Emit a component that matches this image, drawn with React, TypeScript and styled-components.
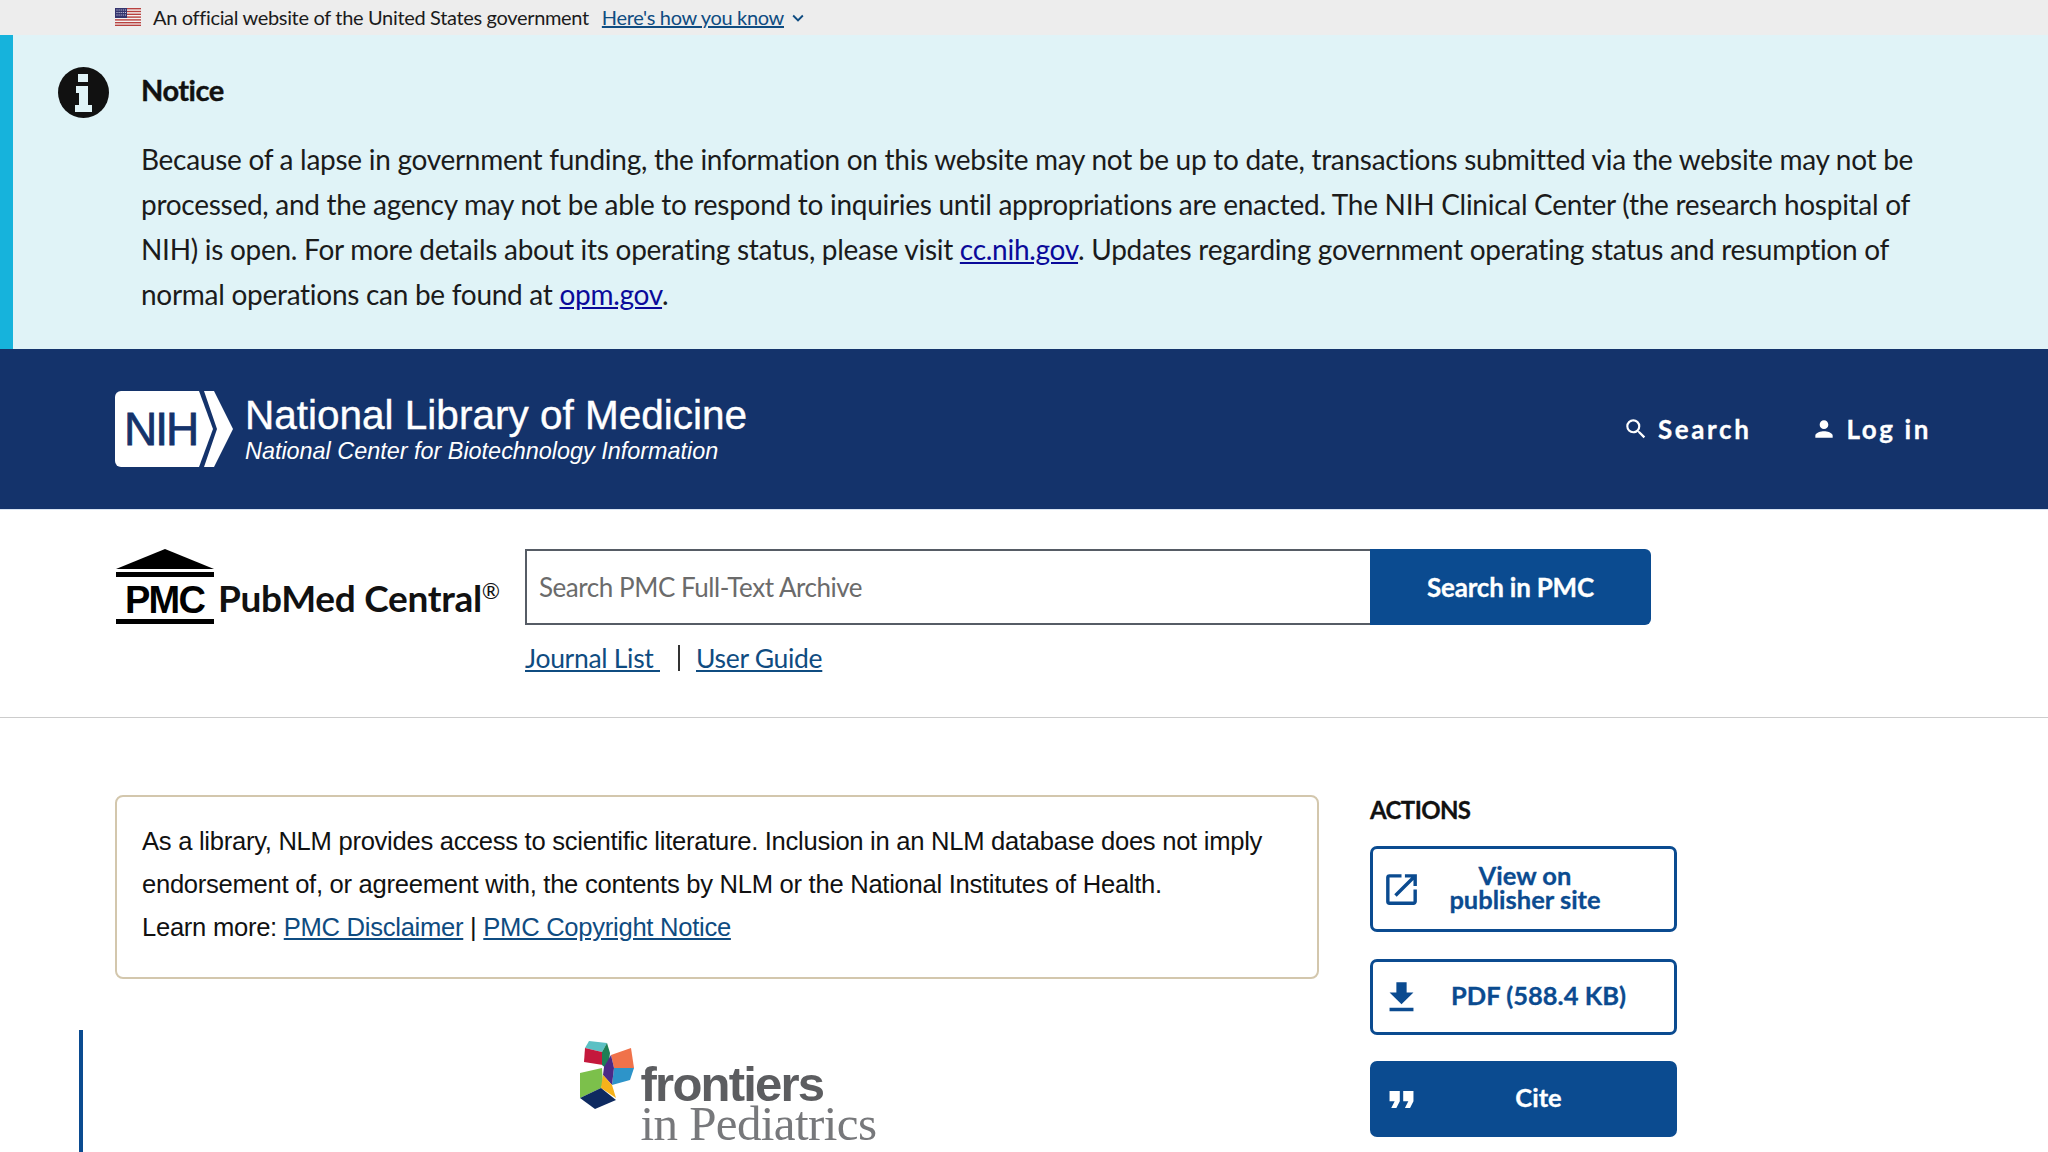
import React from 'react';
import styled, { createGlobalStyle } from 'styled-components';

const SANS = '"Lato", "Noto Sans", sans-serif';
const ARIAL = '"Liberation Sans", Arial, sans-serif';
const BLUE = '#0b4b90';
const LINK = '#0f4c81';

const GlobalStyle = createGlobalStyle`
  html, body {
    margin: 0;
    padding: 0;
    height: 1152px;
    overflow: hidden;
    background: #fff;
    font-family: ${SANS};
    color: #1b1b1b;
  }
  * { box-sizing: border-box; }
`;

const GovBanner = styled.div`
  height: 35px;
  background: #ededed;
  display: flex;
  align-items: center;
  padding: 0 0 2px 115px;
  font-size: 20px;
  letter-spacing: -0.33px;
`;

const GovText = styled.span`
  margin: 0 13px 0 12px;
`;

const GovLink = styled.a`
  color: ${LINK};
  text-decoration: underline;
`;

const Chevron = styled.svg`
  width: 22px;
  height: 22px;
  margin: 3px 0 0 3px;
  fill: ${LINK};
`;

const Notice = styled.section`
  height: 314px;
  background: #e0f3f7;
  border-left: 13px solid #16b3dc;
  display: flex;
  padding: 32px 0 0 45px;
`;

const NoticeIcon = styled.svg`
  width: 51px;
  height: 51px;
  flex: none;
`;

const NoticeBody = styled.div`
  margin: 3px 0 0 32px;
`;

const NoticeTitle = styled.h3`
  margin: 0 0 27px;
  font-size: 29px;
  line-height: 40px;
  font-weight: 700;
  letter-spacing: -0.5px;
  -webkit-text-stroke: 0.4px #111;
  color: #111;
`;

const NoticeText = styled.p`
  margin: 0;
  font-size: 28px;
  line-height: 45px;
  letter-spacing: -0.28px;
  white-space: nowrap;

  a {
    color: #0a0a9a;
  }
`;

const NihHeader = styled.header`
  height: 161px;
  background: #14336b;
  display: flex;
  align-items: center;
  justify-content: space-between;
  padding: 0 117px 0 115px;
  border-bottom: 1px solid #d9e4f2;
`;

const Brand = styled.div`
  display: flex;
  align-items: center;
  gap: 12px;
  margin-top: -1px;
`;

const BrandText = styled.div`
  font-family: ${ARIAL};
  color: #fff;
`;

const BrandTitle = styled.div`
  font-size: 40.5px;
  line-height: 44px;
  -webkit-text-stroke: 0.4px #fff;
`;

const BrandSubtitle = styled.div`
  font-size: 23.4px;
  line-height: 28px;
  font-style: italic;
`;

const HeaderNav = styled.nav`
  display: flex;
  gap: 60px;
`;

const NavItem = styled.a`
  display: flex;
  align-items: center;
  gap: 9px;
  color: #fff;
  font-size: 26px;
  font-weight: 700;
  letter-spacing: 2.6px;
  -webkit-text-stroke: 0.3px #fff;
`;

const NavIcon = styled.svg`
  width: 26px;
  height: 26px;
  fill: #fff;
`;

const SearchBar = styled.div`
  height: 208px;
  border-bottom: 1px solid #ccc;
  display: flex;
  padding: 39px 0 0 116px;
`;

const PmcLogo = styled.div`
  width: 409px;
  height: 76px;
  display: flex;
  align-items: flex-end;
  gap: 4px;
`;

const PmcName = styled.span`
  font-size: 37px;
  line-height: 44px;
  font-weight: 700;
  letter-spacing: -0.3px;
  color: #111;
  white-space: nowrap;
  margin-bottom: 5px;

  sup {
    font-size: 22px;
    line-height: 0;
    letter-spacing: 0;
    font-weight: 400;
  }
`;

const SearchColumn = styled.div`
  display: flex;
  flex-direction: column;
`;

const SearchRow = styled.div`
  display: flex;
  height: 76px;
`;

const SearchInput = styled.div`
  width: 845px;
  border: 2px solid #565c65;
  border-right: none;
  display: flex;
  align-items: center;
  padding-left: 12px;
  font-size: 26px;
  letter-spacing: -0.45px;
  color: #6b6b6b;
`;

const SearchButton = styled.button`
  width: 281px;
  border: none;
  border-radius: 0 6px 6px 0;
  background: ${BLUE};
  color: #fff;
  font-family: ${SANS};
  font-size: 26px;
  font-weight: 700;
  letter-spacing: -0.2px;
  -webkit-text-stroke: 0.3px #fff;
`;

const SearchLinks = styled.div`
  display: flex;
  align-items: center;
  margin-top: 15px;
  font-size: 26.5px;
  line-height: 36px;
  letter-spacing: -0.3px;
`;

const SearchLink = styled.a`
  color: ${LINK};
  text-decoration: underline;
  white-space: pre;
`;

const Divider = styled.span`
  margin: 0 16px 0 18px;
  width: 2px;
  height: 26px;
  background: #333;
`;

const Main = styled.main`
  display: flex;
  padding: 77px 0 0 115px;
`;

const Content = styled.div`
  width: 1204px;
`;

const Disclaimer = styled.div`
  height: 184px;
  border: 2px solid #d3c7ad;
  border-radius: 8px;
  padding: 23px 25px;
  font-family: ${ARIAL};
  font-size: 25.6px;
  line-height: 43px;
  letter-spacing: -0.28px;
  color: #111;
  white-space: nowrap;

  a {
    color: ${LINK};
  }
`;

const Article = styled.article`
  margin: 51px 0 0 -36px;
  height: 122px;
  padding-top: 10px;
  border-left: 4px solid ${BLUE};
  display: flex;
  justify-content: center;
`;

const Frontiers = styled.div`
  display: flex;
  align-items: flex-start;
  margin-left: 52px;
`;

const FrontiersMark = styled.svg`
  width: 58px;
  height: 69px;
  flex: none;
`;

const FrontiersText = styled.div`
  margin: 24px 0 0 5px;
  color: #5c5d60;
`;

const FrontiersName = styled.div`
  font-family: ${ARIAL};
  font-size: 49px;
  line-height: 40px;
  font-weight: 700;
  letter-spacing: -1.8px;
`;

const FrontiersJournal = styled.div`
  font-family: "Liberation Serif", serif;
  font-size: 49px;
  line-height: 40px;
  color: #77787b;
  letter-spacing: -0.6px;
`;

const Sidebar = styled.aside`
  width: 307px;
  margin-left: 51px;
  display: flex;
  flex-direction: column;
`;

const SideTitle = styled.h2`
  margin: 0 0 22px;
  font-size: 24px;
  line-height: 29px;
  font-weight: 700;
  letter-spacing: -0.6px;
  -webkit-text-stroke: 0.3px #111;
  color: #111;
`;

const ActionButton = styled.a<{ $solid?: boolean; $tall?: boolean; $gap: number }>`
  height: ${p => (p.$tall ? 86 : 76)}px;
  margin-bottom: ${p => p.$gap}px;
  display: flex;
  align-items: center;
  padding-left: 8px;
  border: 3px solid ${BLUE};
  border-radius: 7px;
  background: ${p => (p.$solid ? BLUE : '#fff')};
  color: ${p => (p.$solid ? '#fff' : BLUE)};
  font-size: 25.5px;
  line-height: 24px;
  font-weight: 700;
  -webkit-text-stroke: 0.3px currentColor;
`;

const ActionIcon = styled.svg`
  width: 41px;
  height: 41px;
  flex: none;
  fill: currentColor;
`;

const ActionLabel = styled.span<{ $inset: number }>`
  flex: 1;
  text-align: center;
  padding: 0 ${p => p.$inset}px 4px 0;
`;

const Icon = ({ d }: { d: string }) => (
  <ActionIcon viewBox="0 0 24 24">
    <path d={d} />
  </ActionIcon>
);

const Flag = () => (
  <svg width="26" height="18" viewBox="0 0 26 18">
    <rect width="26" height="18" fill="#f4f4f4" />
    {[0, 2.8, 5.6, 8.4, 11.2, 14, 16.6].map(y => (
      <rect key={y} y={y} width="26" height="1.4" fill="#b8413f" />
    ))}
    <rect width="12" height="10" fill="#34346e" />
    {[1.5, 4, 6.5].map(y =>
      [1.5, 3.6, 5.7, 7.8, 9.9].map(x => <rect key={`${x}-${y}`} x={x} y={y} width="1" height="1" fill="#dde" />)
    )}
  </svg>
);

const NihMark = () => (
  <svg width="118" height="76" viewBox="0 0 118 76">
    <path d="M6 0H84V76H6a6 6 0 0 1-6-6V6a6 6 0 0 1 6-6z" fill="#fff" />
    <path d="M84 0l14 38-14 38z" fill="#fff" />
    <path d="M89 0h10l19 38-19 38H89l13-38z" fill="#fff" />
    <text x="9" y="54" fontFamily={ARIAL} fontSize="46" letterSpacing="-2" stroke="#14336b" strokeWidth="0.8" fill="#14336b">NIH</text>
  </svg>
);

const PmcMark = () => (
  <svg width="98" height="76" viewBox="0 0 98 76" style={{ flex: 'none' }}>
    <path d="M49 0L98 20H0z" fill="#000" />
    <rect x="0" y="23" width="98" height="5" fill="#000" />
    <text x="9" y="64" fontFamily={ARIAL} fontSize="38" fontWeight="700" letterSpacing="-1.8" fill="#000">PMC</text>
    <rect x="0" y="70" width="98" height="5" fill="#000" />
  </svg>
);

const CubeMark = () => (
  <FrontiersMark viewBox="0 0 58 69">
    <path d="M7 8l4-7 18 2-5 9z" fill="#5cc0c4" />
    <path d="M7 8l17 4 1 13-19-3z" fill="#c4183c" />
    <path d="M29 3l3 10-2 17-6-5V12z" fill="#1d7f55" />
    <path d="M33 15l20-7 3 20H36z" fill="#f0724a" />
    <path d="M36 28h20l-4 12-18 5z" fill="#2d94c9" />
    <path d="M33 15l3 13-2 17-9-10 1-8z" fill="#4b2a86" />
    <path d="M2 33l22-5 1 15-2 5-21 10z" fill="#7cc04b" />
    <path d="M25 35l9 10 4 13-15-10z" fill="#f6b21b" />
    <path d="M2 58l21-10 15 12-21 9z" fill="#0e2a60" />
  </FrontiersMark>
);

const App: React.FC = () => (
  <>
    <GlobalStyle />
    <GovBanner>
      <Flag />
      <GovText>An official website of the United States government</GovText>
      <GovLink>Here's how you know</GovLink>
      <Chevron viewBox="0 0 24 24"><path d="M16.59 8.59 12 13.17 7.41 8.59 6 10l6 6 6-6z" /></Chevron>
    </GovBanner>

    <Notice>
      <NoticeIcon viewBox="0 0 51 51">
        <circle cx="25.5" cy="25.5" r="25.5" fill="#111" />
        <path d="M20 7h10v8H20zM18 19h12v19h4v7H17v-7h4V26h-3z" fill="#e0f3f7" />
      </NoticeIcon>
      <NoticeBody>
        <NoticeTitle>Notice</NoticeTitle>
        <NoticeText>
          Because of a lapse in government funding, the information on this website may not be up to date, transactions submitted via the website may not be<br />
          processed, and the agency may not be able to respond to inquiries until appropriations are enacted. The NIH Clinical Center (the research hospital of<br />
          NIH) is open. For more details about its operating status, please visit <a href="#cc">cc.nih.gov</a>. Updates regarding government operating status and resumption of<br />
          normal operations can be found at <a href="#opm">opm.gov</a>.
        </NoticeText>
      </NoticeBody>
    </Notice>

    <NihHeader>
      <Brand>
        <NihMark />
        <BrandText>
          <BrandTitle>National Library of Medicine</BrandTitle>
          <BrandSubtitle>National Center for Biotechnology Information</BrandSubtitle>
        </BrandText>
      </Brand>
      <HeaderNav>
        <NavItem>
          <NavIcon viewBox="0 0 24 24"><path d="M15.5 14h-.79l-.28-.27A6.471 6.471 0 0 0 16 9.5 6.5 6.5 0 1 0 9.5 16c1.61 0 3.09-.59 4.23-1.57l.27.28v.79l5 4.99L20.49 19l-4.99-5zm-6 0C7.01 14 5 11.99 5 9.5S7.01 5 9.5 5 14 7.01 14 9.5 11.99 14 9.5 14z" /></NavIcon>
          Search
        </NavItem>
        <NavItem>
          <NavIcon viewBox="0 0 24 24"><path d="M12 12c2.21 0 4-1.79 4-4s-1.79-4-4-4-4 1.79-4 4 1.79 4 4 4zm0 2c-2.67 0-8 1.34-8 4v2h16v-2c0-2.66-5.33-4-8-4z" /></NavIcon>
          Log in
        </NavItem>
      </HeaderNav>
    </NihHeader>

    <SearchBar>
      <PmcLogo>
        <PmcMark />
        <PmcName>PubMed Central<sup>®</sup></PmcName>
      </PmcLogo>
      <SearchColumn>
        <SearchRow>
          <SearchInput>Search PMC Full-Text Archive</SearchInput>
          <SearchButton>Search in PMC</SearchButton>
        </SearchRow>
        <SearchLinks>
          <SearchLink>Journal List </SearchLink>
          <Divider />
          <SearchLink>User Guide</SearchLink>
        </SearchLinks>
      </SearchColumn>
    </SearchBar>

    <Main>
      <Content>
        <Disclaimer>
          As a library, NLM provides access to scientific literature. Inclusion in an NLM database does not imply<br />
          endorsement of, or agreement with, the contents by NLM or the National Institutes of Health.<br />
          Learn more: <a href="#d">PMC Disclaimer</a> | <a href="#c">PMC Copyright Notice</a>
        </Disclaimer>
        <Article>
          <Frontiers>
            <CubeMark />
            <FrontiersText>
              <FrontiersName>frontiers</FrontiersName>
              <FrontiersJournal>in Pediatrics</FrontiersJournal>
            </FrontiersText>
          </Frontiers>
        </Article>
      </Content>
      <Sidebar>
        <SideTitle>ACTIONS</SideTitle>
        <ActionButton $tall $gap={27}>
          <Icon d="M19 19H5V5h7V3H5a2 2 0 0 0-2 2v14a2 2 0 0 0 2 2h14c1.1 0 2-.9 2-2v-7h-2v7zM14 3v2h3.59l-9.83 9.83 1.41 1.41L19 6.41V10h2V3h-7z" />
          <ActionLabel $inset={46}>View on<br />publisher site</ActionLabel>
        </ActionButton>
        <ActionButton $gap={26}>
          <Icon d="M19 9h-4V3H9v6H5l7 7 7-7zM5 18v2h14v-2H5z" />
          <ActionLabel $inset={19}>PDF (588.4 KB)</ActionLabel>
        </ActionButton>
        <ActionButton $solid $gap={0}>
          <Icon d="M6 17h3l2-4V7H5v6h3zm8 0h3l2-4V7h-6v6h3z" />
          <ActionLabel $inset={19}>Cite</ActionLabel>
        </ActionButton>
      </Sidebar>
    </Main>
  </>
);

export default App;
